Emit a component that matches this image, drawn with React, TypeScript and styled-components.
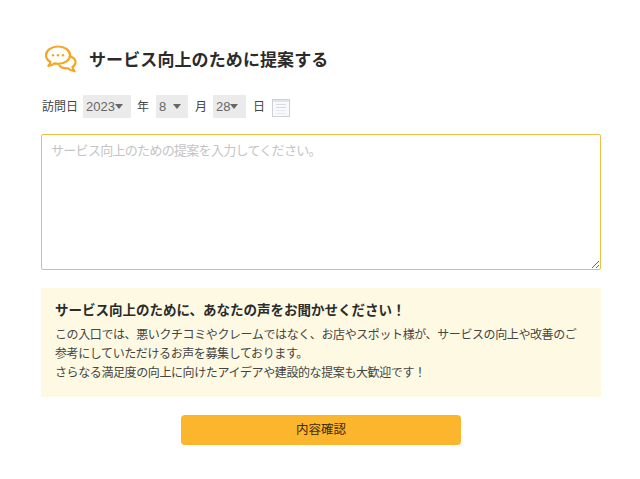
import styled, { createGlobalStyle } from 'styled-components';

const Global = createGlobalStyle`
html, body {
  margin: 0;
  padding: 0;
  background: #fff;
}
body {
  font-family: "Liberation Sans", "Noto Sans CJK JP", sans-serif;
  color: #333;
}
`;
const Page = styled.div`
width: 640px;
height: 479px;
overflow: hidden;
box-sizing: border-box;
padding: 43px 39px 0 41px;
`;
const Heading = styled.div`
display: flex;
align-items: center;
gap: 11px;
height: 34px;
padding-left: 3px;
`;
const Title = styled.h2`
margin: 1px 0 0;
font-size: 17px;
font-weight: 700;
letter-spacing: 0.1px;
line-height: 34px;
color: #2b2b2b;
`;
const DateRow = styled.div`
display: flex;
align-items: center;
height: 24px;
margin-top: 18px;
font-size: 12px;
color: #444;
`;
const Unit = styled.span<{ $gap: number }>`
margin-left: ${(p) => p.$gap}px;
margin-top: -3px;
`;
const SelectBox = styled.div<{ $width: number; $gap: number }>`
position: relative;
width: ${(p) => p.$width}px;
height: 23px;
margin-left: ${(p) => p.$gap}px;
margin-top: -1px;
background: #ebebeb;
`;
const Select = styled.select`
appearance: none;
display: block;
width: 100%;
height: 100%;
border: 0;
padding: 0 0 0 3px;
background: transparent;
font-family: inherit;
font-size: 13px;
color: #666;
outline: none;
`;
const Arrow = styled.i<{ $right: number }>`
position: absolute;
top: 9px;
right: ${(p) => p.$right}px;
border-left: 4px solid transparent;
border-right: 4px solid transparent;
border-top: 5px solid #666;
pointer-events: none;
`;
const CalendarIcon = styled.svg`
display: block;
margin-left: 7px;
margin-top: 1px;
`;
const Textarea = styled.textarea`
display: block;
width: 560px;
height: 136px;
box-sizing: border-box;
margin-top: 15px;
padding: 6px 9px;
border: 1px solid #efbf3f;
border-radius: 2px;
font-family: inherit;
font-size: 13px;
letter-spacing: -0.7px;
line-height: 20px;
color: #333;
outline: none;
resize: both;
&::placeholder {
  color: #c4c4c4;
}
`;
const Note = styled.div`
box-sizing: border-box;
width: 560px;
height: 109px;
margin-top: 18px;
padding: 13px 14px;
background: #fdf9e2;
`;
const NoteTitle = styled.p`
margin: 0 0 5px;
font-size: 13.5px;
font-weight: 700;
line-height: 20px;
color: #2b2b2b;
`;
const NoteText = styled.p`
margin: 0;
font-size: 12px;
letter-spacing: -0.4px;
line-height: 19px;
color: #444;
`;
const ButtonRow = styled.div`
display: flex;
justify-content: center;
margin-top: 18px;
`;
const Submit = styled.button`
width: 280px;
height: 30px;
border: 0;
border-radius: 4px;
background: #fbb62d;
font-family: inherit;
font-size: 12.5px;
color: #3d2b0c;
padding: 0 0 3px;
`;

const years = ['2023'];
const months = ['8'];
const days = ['28'];

const ChatIcon = () => (
    <svg width="34" height="30" viewBox="0 0 34 30" fill="none" stroke="#f5a623" strokeWidth="2.2" strokeLinecap="round" strokeLinejoin="round">
        <path d="M14 1.5C7.3 1.5 2 5.4 2 10.2c0 2.9 1.8 5.2 4.5 6.8-.3 1.5-1 2.7-2.2 3.8 2.4-.2 4.6-1 6.3-2.4 1.1.3 2.2.4 3.4.4 6.7 0 12-3.7 12-8.6S20.7 1.5 14 1.5z" />
        <path d="M26.8 11.5c2.9 1.2 4.7 3.2 4.7 5.7 0 2-1.2 3.7-3 4.8.2 1.6 1 3 2 4.2-2.8-.4-5-1.4-6.6-2.9-3.4.3-6.6-.6-8.4-2.6" />
        <circle cx="9" cy="10.2" r="1.2" fill="#f5a623" stroke="none" />
        <circle cx="14" cy="10.2" r="1.2" fill="#f5a623" stroke="none" />
        <circle cx="19" cy="10.2" r="1.2" fill="#f5a623" stroke="none" />
    </svg>
);

const App = () => {
    return (
        <>
            <Global />
            <Page>
                <Heading>
                    <ChatIcon />
                    <Title>サービス向上のために提案する</Title>
                </Heading>
                <DateRow>
                    <Unit $gap={1}>訪問日</Unit>
                    <SelectBox $width={48} $gap={5}>
                        <Select defaultValue="2023">
                            {years.map((y) => <option key={y}>{y}</option>)}
                        </Select>
                        <Arrow $right={8} />
                    </SelectBox>
                    <Unit $gap={6}>年</Unit>
                    <SelectBox $width={32} $gap={7}>
                        <Select defaultValue="8">
                            {months.map((m) => <option key={m}>{m}</option>)}
                        </Select>
                        <Arrow $right={7} />
                    </SelectBox>
                    <Unit $gap={7}>月</Unit>
                    <SelectBox $width={33} $gap={6}>
                        <Select defaultValue="28">
                            {days.map((d) => <option key={d}>{d}</option>)}
                        </Select>
                        <Arrow $right={8} />
                    </SelectBox>
                    <Unit $gap={7}>日</Unit>
                    <CalendarIcon width="18" height="18" viewBox="0 0 18 18" fill="none">
                        <rect x="0.5" y="0.5" width="17" height="17" fill="#f7f9fb" stroke="#ccd2d6" />
                        <path d="M1 2h16" stroke="#dfe5e9" strokeWidth="2" />
                        <path d="M4 5.5h10M4 8.5h10" stroke="#d5dbdf" />
                        <path d="M4 11.5h10M4 14.5h10" stroke="#e6eaec" />
                    </CalendarIcon>
                </DateRow>
                <Textarea placeholder="サービス向上のための提案を入力してください。" />
                <Note>
                    <NoteTitle>サービス向上のために、あなたの声をお聞かせください！</NoteTitle>
                    <NoteText>
                        この入口では、悪いクチコミやクレームではなく、お店やスポット様が、サービスの向上や改善のご<br />
                        参考にしていただけるお声を募集しております。<br />
                        さらなる満足度の向上に向けたアイデアや建設的な提案も大歓迎です！
                    </NoteText>
                </Note>
                <ButtonRow>
                    <Submit>内容確認</Submit>
                </ButtonRow>
            </Page>
        </>
    );
};

export default App;
